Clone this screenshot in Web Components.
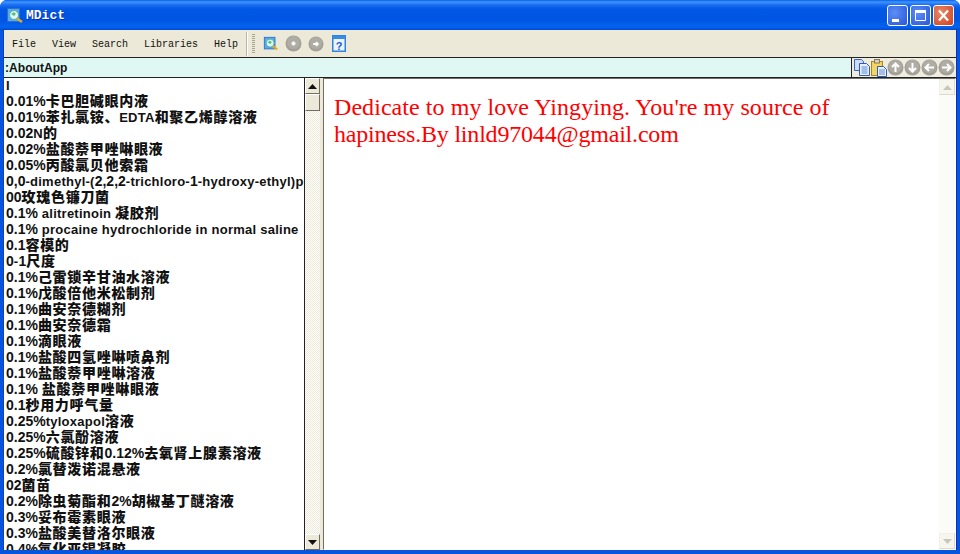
<!DOCTYPE html>
<html><head><meta charset="utf-8"><style>html,body{margin:0;padding:0;background:#fff;height:554px;overflow:hidden}</style></head><body>
<xp-window title="MDict">
  <menu-bar slot="menu"></menu-bar>
  <addr-bar slot="addr" label=":AboutApp"></addr-bar>
  <word-list slot="list"></word-list>
  <xp-scrollbar slot="listbar" thumb></xp-scrollbar>
  <content-pane slot="content"><span style="display:block;letter-spacing:.06px;white-space:nowrap">Dedicate to my love Yingying. You're my source of</span><span style="display:block;letter-spacing:-.19px;white-space:nowrap">hapiness.By linld97044@gmail.com</span></content-pane>
</xp-window>
<script>
const appIcon=(s)=>`<svg width="${s}" height="${s}" viewBox="0 0 18 18"><rect x="1.500" y="1.500" width="12" height="13" fill="#5aa8f0" stroke="#2c6fd0"/><circle cx="8" cy="8" r="4.500" fill="#dff5fa" stroke="#46b58c"/><path d="M5 7l3-2 2 2-2 2z" fill="#5cc082"/><path d="M11 11.500l5 3.500" stroke="#e0ac24" stroke-width="2.400"/></svg>`;
const circle=(d,s=17)=>`<svg width="${s}" height="${s}" viewBox="0 0 17 17"><circle cx="8.500" cy="8.500" r="8" fill="#a3a197"/><circle cx="8.500" cy="7.500" r="6.500" fill="#aeaca3"/><path d="${d}" fill="none" stroke="#fff" stroke-width="2"/></svg>`;
const ICON_COPY=`<svg width="16" height="17" viewBox="0 0 16 17"><path d="M.5.5h7l2 2v9h-9z" fill="#cfdcf5" stroke="#3b66b8"/><path d="M5.500 4.500h7l3 3v9h-10z" fill="#e8f0fc" stroke="#2f5cb4"/><path d="M7.500 8h6M7.500 10h6M7.500 12h6M7.500 14h6" stroke="#5f8bd8"/></svg>`;
const ICON_PASTE=`<svg width="16" height="18" viewBox="0 0 16 18"><rect x=".5" y="2.500" width="11" height="14" fill="#f4d562" stroke="#a8842a"/><rect x="3.500" y=".5" width="5" height="3.500" fill="#d8d4c4" stroke="#857a50"/><path d="M6.500 7.500h6l3 3v7h-9z" fill="#eaf1fc" stroke="#2f5cb4"/><path d="M8 11h6M8 13h6M8 15h6" stroke="#5f8bd8"/></svg>`;
const ICON_HELP=`<svg width="14" height="17" viewBox="0 0 14 17"><rect x=".75" y=".75" width="12.500" height="15.500" fill="#eaf4ff" stroke="#2f83e0" stroke-width="1.500"/><rect x="1" y="1" width="12" height="3" fill="#3a8be4"/><text x="7" y="14.500" font-family="Liberation Sans" font-weight="700" font-size="11" text-anchor="middle" fill="#2458c8">?</text></svg>`;

customElements.define('xp-window',class extends HTMLElement{constructor(){super();this.attachShadow({mode:'open'}).innerHTML=`<style>
:host{display:flex;flex-direction:column;width:960px;height:554px;box-sizing:border-box;border-radius:7px 7px 0 0;overflow:hidden;background:#0855dd}
.title{height:30px;flex:none;display:flex;align-items:center;padding:1px 6px 0 6px;box-sizing:border-box;background:linear-gradient(#0a5fe6 0,#3d95ff 2px,#1a6cf0 5px,#0058e4 9px,#0055e3 20px,#0464ee 27px,#0048d0 30px);color:#fff;font:700 13px "Liberation Mono",monospace;text-shadow:1px 1px #0a2f9a}
.ic{width:20px;display:flex}.t{flex:1;margin-top:-1px}
.btns{display:flex;gap:2px}.b{width:21px;height:21px;box-sizing:border-box;border:1px solid #fff;border-radius:3px;background:radial-gradient(circle at 35% 35%,#5c8ef5,#2a55d8);display:flex}
.b.x{background:radial-gradient(circle at 35% 35%,#e8896a,#cf3f1c)}
.body{flex:1;min-height:0;margin:0 4px 4px 4px;background:#ece9d8;display:flex;flex-direction:column;box-shadow:-1px 0 #0a40c8,1px 0 #0a30c0}
.main{flex:1;min-height:0;display:flex;border-top:1px solid #222}
.split{width:3px;flex:none;background:#ece9d8}
.right{flex:1;min-width:0;display:flex}
</style>
<div class="title"><span class="ic">${appIcon(18)}</span><span class="t">${this.getAttribute('title')}</span>
<div class="btns"><span class="b"><svg width="19" height="19"><rect x="4" y="13" width="7" height="3" fill="#fff"/></svg></span><span class="b"><svg width="19" height="19"><path d="M4.500 5.500h10v9h-10z" fill="none" stroke="#fff"/><rect x="4" y="4" width="11" height="3" fill="#fff"/></svg></span><span class="b x"><svg width="19" height="19"><path d="M5 4.500l9 10M14 4.500l-9 10" stroke="#fff" stroke-width="2.200"/></svg></span></div></div>
<div class="body"><slot name="menu"></slot><slot name="addr"></slot>
<div class="main"><slot name="list"></slot><slot name="listbar"></slot><div class="split"></div><div class="right"><slot name="content"></slot></div></div></div>`}});

customElements.define('menu-bar',class extends HTMLElement{constructor(){super();this.attachShadow({mode:'open'}).innerHTML=`<style>
:host{display:flex;align-items:center;height:28px;flex:none;box-sizing:border-box;padding:0 0 0 8px;background:#ece9d8;border-bottom:1px solid #222;font:10px "Liberation Mono",monospace;color:#111}
.m{display:flex;gap:16px;padding-top:1px}
.sep{width:1px;height:24px;background:#b8b5a4;box-shadow:1px 0 #fff;margin-left:8px}
.grip{width:3px;height:20px;margin:0 8px 0 5px;background:repeating-linear-gradient(#a8a594 0 1px,transparent 1px 2px)}
.i{display:flex;align-items:center}
.i span{display:flex}
</style><div class="m"><span>File</span><span>View</span><span>Search</span><span>Libraries</span><span>Help</span></div><span class="sep"></span><span class="grip"></span>
<div class="i"><span>${appIcon(16)}</span><span style="margin-left:6px">${circle('M8.500 6.500v4M6.500 8.500h4')}</span><span style="margin-left:6px">${circle('M5.500 8.500h5M8.500 6.500l2 2-2 2',16)}</span><span style="margin-left:8px">${ICON_HELP}</span></div>`}});

customElements.define('addr-bar',class extends HTMLElement{constructor(){super();this.attachShadow({mode:'open'}).innerHTML=`<style>
:host{display:flex;height:19px;flex:none;background:#e0f8f4;font:700 12px "Liberation Sans",sans-serif;color:#111}
.l{flex:1;padding:1px 0 0 1px;line-height:19px;box-sizing:border-box;letter-spacing:.05px}
.r{display:flex;align-items:center;border-left:1px solid #222;background:#efece0;padding-left:2px;width:105px;box-sizing:border-box}
.c{display:flex;width:17px;justify-content:center}
</style><div class="l">${this.getAttribute('label')}</div><div class="r"><span style="display:flex;width:17px">${ICON_COPY}</span><span style="display:flex;width:16px">${ICON_PASTE}</span>
<span class="c">${circle('M8.500 13V5M5 8l3.500-3.500L12 8')}</span><span class="c">${circle('M8.500 4v8M5 9l3.500 3.500L12 9')}</span><span class="c">${circle('M13 8.500H5M8 5L4.500 8.500 8 12')}</span><span class="c">${circle('M4 8.500h8M9 5l3.500 3.500L9 12')}</span></div>`}});

const WORDS=["I","0.01%卡巴胆碱眼内液","0.01%苯扎氯铵、EDTA和聚乙烯醇溶液","0.02N的","0.02%盐酸萘甲唑啉眼液","0.05%丙酸氯贝他索霜","0,0-dimethyl-(2,2,2-trichloro-1-hydroxy-ethyl)phosphonate","00玫瑰色镰刀菌","0.1% alitretinoin 凝胶剂","0.1% procaine hydrochloride in normal saline","0.1容模的","0-1尺度","0.1%己雷锁辛甘油水溶液","0.1%戊酸倍他米松制剂","0.1%曲安奈德糊剂","0.1%曲安奈德霜","0.1%滴眼液","0.1%盐酸四氢唑啉喷鼻剂","0.1%盐酸萘甲唑啉溶液","0.1% 盐酸萘甲唑啉眼液","0.1秒用力呼气量","0.25%tyloxapol溶液","0.25%六氯酚溶液","0.25%硫酸锌和0.12%去氧肾上腺素溶液","0.2%氯替泼诺混悬液","02菌苗","0.2%除虫菊酯和2%胡椒基丁醚溶液","0.3%妥布霉素眼液","0.3%盐酸美替洛尔眼液","0.4%氧化亚锡凝胶"];
customElements.define('word-list',class extends HTMLElement{constructor(){super();
const rows=WORDS.map(w=>'<div class="r">'+w.replace(/[\u3000-\u9fff]+|[0-9.,%]+/g,m=>/^[0-9.,%]/.test(m)?'<i>'+m+'</i>':'<b>'+m+'</b>')+'</div>').join('');
this.attachShadow({mode:'open'}).innerHTML=`<style>
:host{display:block;width:300px;flex:none;height:100%;box-sizing:border-box;padding:0 0 0 2px;background:#fff;overflow:hidden;font:700 13px "Liberation Sans",sans-serif;color:#111;letter-spacing:.25px}
.r{height:16px;line-height:16px;white-space:pre}
b{font:900 14px "Noto Sans CJK SC",sans-serif;letter-spacing:.7px;line-height:0}
i{font:700 14px "Liberation Sans",sans-serif;letter-spacing:0;line-height:0}
</style>${rows}`}});

customElements.define('xp-scrollbar',class extends HTMLElement{constructor(){super();const pale=this.hasAttribute('pale');
const col=pale?'#c9c7bb':'#111';
this.attachShadow({mode:'open'}).innerHTML=`<style>
:host{display:flex;flex-direction:column;width:16px;flex:none;height:100%;box-sizing:border-box;${pale?'background:#fbfbf8':'border-left:1px solid #222;background:repeating-conic-gradient(#ece9d8 0 25%,#fff 0 50%) 0 0/2px 2px'}}
.btn{height:16px;flex:none;box-sizing:border-box;display:flex;align-items:center;justify-content:center;background:${pale?'#f6f5ee':'#ece9d8'};border:1px solid;border-color:${pale?'#f2f0e6 #dcdad0 #dcdad0 #f2f0e6':'#fff #716f64 #716f64 #fff'}}
.th{height:17px;flex:none;box-sizing:border-box;background:#ece9d8;border:1px solid;border-color:#fff #716f64 #716f64 #fff}
.sp{flex:1}
</style><div class="btn"><svg width="9" height="5"><path d="M4.500 0L9 5H0z" fill="${col}"/></svg></div>${this.hasAttribute('thumb')?'<div class="th"></div>':''}<div class="sp"></div><div class="btn"><svg width="9" height="5"><path d="M4.500 5L9 0H0z" fill="${col}"/></svg></div>`}});

customElements.define('content-pane',class extends HTMLElement{constructor(){super();this.attachShadow({mode:'open'}).innerHTML=`<style>
:host{flex:1;min-width:0;display:flex;box-sizing:border-box;background:#fff;border:1px solid;border-color:#716f64 #fff #fff #716f64}
.t{flex:1;min-width:0;padding:15px 0 0 10px;font:24px/27px "Liberation Serif",serif;color:#f00}
</style><div class="t"><slot></slot></div><xp-scrollbar pale></xp-scrollbar>`}});
</script></body></html>
